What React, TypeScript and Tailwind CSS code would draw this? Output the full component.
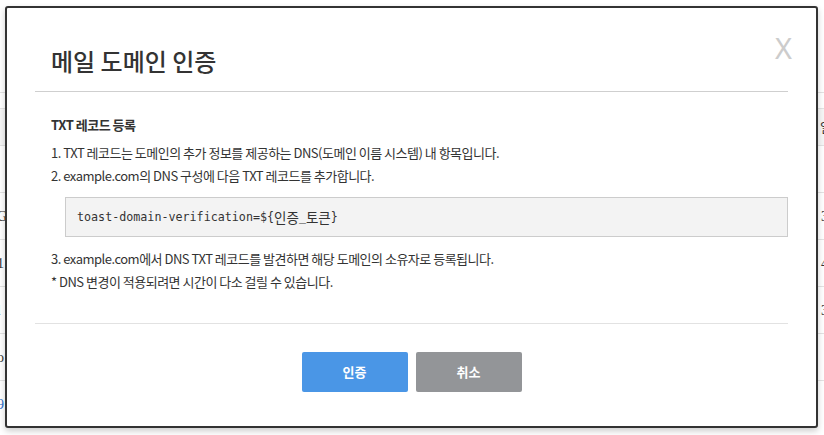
import React from "react";

const rows = [
  { left: "", right: "", leftColor: "text-[#333]" },
  { left: "G", right: "3", leftColor: "text-[#333]" },
  { left: "1", right: "4", leftColor: "text-[#333]" },
  { left: "l", right: "3", leftColor: "text-[#2a6fc9]" },
  { left: "o", right: "", leftColor: "text-[#333]" },
  { left: "9", right: "", leftColor: "text-[#2a6fc9]" },
];

function BackgroundTable() {
  return (
    <div className="w-full font-['Liberation_Serif','Noto_Sans_CJK_KR',serif] text-[14px]">
      <div className="h-[93px] border-b border-[#e3e3e3]" />
      <div className="h-[16px] border-b border-[#e3e3e3]" />
      <div className="h-[36px] bg-[#f6f6f6] flex items-center justify-between">
        <span className="w-[10px]" />
        <span className="w-[10px] text-[#333] font-['Noto_Sans_CJK_KR',sans-serif] text-[13px] -mr-[6px]">
          일
        </span>
      </div>
      {rows.map((r, i) => (
        <div
          key={i}
          className="h-[47px] border-t border-[#e3e3e3] flex items-center justify-between"
        >
          <span className={`-ml-[3px] ${r.leftColor}`}>{r.left}</span>
          <span className="-mr-[4px] text-[#333]">{r.right}</span>
        </div>
      ))}
    </div>
  );
}

export default function App() {
  return (
    <div className="relative w-full h-[435px] bg-white overflow-hidden">
      <BackgroundTable />

      {/* modal */}
      <div className="absolute left-[5px] top-[6px] w-[813px] h-[422px] bg-white border-2 border-[#333] rounded-[3px] shadow-[0_3px_6px_rgba(0,0,0,0.2)] px-[28px] font-['Noto_Sans_CJK_KR','Noto_Sans',sans-serif] text-[#333]">
        <button
          type="button"
          className="absolute right-[24px] top-[22px] text-[29px] leading-[36px] text-[#cccccc] font-['Noto_Sans',sans-serif] font-normal"
        >
          X
        </button>

        <div className="pt-[38px] pb-[15px] px-4 border-b border-[#cfcfcf]">
          <h1 className="text-[24px] leading-[30px] font-medium text-[#333]">
            메일 도메인 인증
          </h1>
        </div>

        <div className="pt-[21px] pb-[30px] pl-4 border-b border-[#e2e2e2] text-[13px] leading-[23px] tracking-[-0.5px]">
          <p className="font-bold mb-[5px]">TXT 레코드 등록</p>
          <p>1. TXT 레코드는 도메인의 추가 정보를 제공하는 DNS(도메인 이름 시스템) 내 항목입니다.</p>
          <p>2. example.com의 DNS 구성에 다음 TXT 레코드를 추가합니다.</p>
          <div className="mt-[10px] ml-[14px] h-[40px] flex items-center px-[11px] bg-[#f3f3f3] border border-[#cccccc] font-['DejaVu_Sans_Mono','Noto_Sans_CJK_KR',monospace] text-[11.7px] tracking-normal text-[#333]">
            toast-domain-verification=${"{"}
            <span className="font-['Noto_Sans_CJK_KR',sans-serif] text-[13.5px]">인증</span>_
            <span className="font-['Noto_Sans_CJK_KR',sans-serif] text-[13.5px]">토큰</span>
            {"}"}
          </div>
          <p className="mt-[10px]">3. example.com에서 DNS TXT 레코드를 발견하면 해당 도메인의 소유자로 등록됩니다.</p>
          <p>* DNS 변경이 적용되려면 시간이 다소 걸릴 수 있습니다.</p>
        </div>

        <div className="pt-[28px] flex justify-center gap-[8px]">
          <button
            type="button"
            className="w-[106px] h-[40px] rounded-[2px] bg-[#4a96e6] text-white text-[13px] font-bold"
          >
            인증
          </button>
          <button
            type="button"
            className="w-[106px] h-[40px] rounded-[2px] bg-[#939598] text-white text-[13px] font-bold"
          >
            취소
          </button>
        </div>
      </div>
    </div>
  );
}
